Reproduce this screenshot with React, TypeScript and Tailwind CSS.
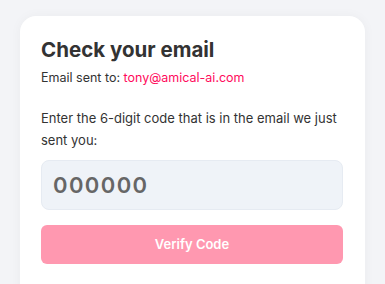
import React from "react";

export default function App() {
  return (
    <div
      className="min-h-screen w-full bg-[#f3f4f7] pt-4 px-5"
      style={{ fontFamily: "Inter, 'Noto Sans', sans-serif" }}
    >
      <div className="w-[345px] h-[300px] rounded-2xl bg-white shadow-[0_0_12px_rgba(0,0,0,0.04)] px-[21px] pt-5">
        <h1 className="text-[20.5px] leading-[28px] font-bold text-[#333333]">
          Check your email
        </h1>
        <p className="mt-1 text-[12.5px] leading-[20px] text-[#333333]">
          Email sent to: <span className="text-[#ff0a5c]">tony@amical-ai.com</span>
        </p>
        <p className="mt-[19px] text-[13px] leading-[22px] text-[#333333]">
          Enter the 6-digit code that is in the email we just sent you:
        </p>
        <div className="mt-[9px] h-[50px] w-[302px] rounded-lg border border-[#e6ebf2] bg-[#eff3f8] flex items-center pl-[11px]">
          <span className="text-[22px] font-semibold text-[#666666] tracking-[1.4px]">000000</span>
        </div>
        <button className="mt-[15px] h-[39px] w-[302px] rounded-md bg-[#ff98b0] text-white text-[13px] font-semibold flex items-center justify-center">
          Verify Code
        </button>
      </div>
    </div>
  );
}
